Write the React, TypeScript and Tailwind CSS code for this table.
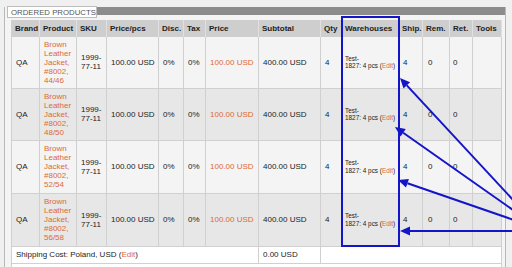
const sizes = ["44/46", "48/50", "52/54", "56/58"];

const cols = [28, 37, 30, 52, 25, 22, 53, 62, 21, 57, 24, 27, 23, 29];
const heads = ["Brand", "Product", "SKU", "Price/pcs", "Disc.", "Tax", "Price", "Subtotal", "Qty", "Warehouses", "Ship.", "Rem.", "Ret.", "Tools"];

// arrows drawn from a point off the right edge toward the warehouses column
const origin = { x: 540, y: 229 };
const tips = [
  { x: 400, y: 78 },
  { x: 395, y: 127 },
  { x: 398, y: 180 },
  { x: 400, y: 231, flat: true },
];

function Arrow({ tx, ty, ox, oy }: { tx: number; ty: number; ox: number; oy: number }) {
  const dx = tx - ox;
  const dy = ty - oy;
  const len = Math.hypot(dx, dy);
  const ux = dx / len;
  const uy = dy / len;
  const bx = tx - ux * 10;
  const by = ty - uy * 10;
  const px = -uy * 4.5;
  const py = ux * 4.5;
  return (
    <g>
      <line x1={ox} y1={oy} x2={bx} y2={by} stroke="#1414c8" strokeWidth={2} />
      <polygon points={`${tx},${ty} ${bx + px},${by + py} ${bx - px},${by - py}`} fill="#1414c8" />
    </g>
  );
}

function Edit() {
  return (
    <>
      (<span className="text-[#dc6a35]">Edit</span>)
    </>
  );
}

const td = "border-r border-b border-[#d0d0d0] px-[4px] whitespace-nowrap";

export default function App() {
  return (
    <div className="relative w-[512px] h-[267px] overflow-hidden bg-[#f0f0f0] font-['Liberation_Sans',Arial,sans-serif] text-[8px] leading-[9px] text-[#222]">
      <div className="ml-[4px] mt-[7px] w-[502px] h-[270px] border-x border-[#b8b8b8] bg-[#f4f4f4]">
        {/* section title tab + bar */}
        <div className="flex h-[11px] items-start">
          <div className="relative z-[1] ml-[2px] -mt-[1px] h-[12px] w-[90px] shrink-0 border border-[#bdbdbd] bg-white pl-[3px] text-[7.8px] leading-[12px] text-[#555] uppercase whitespace-nowrap">
            Ordered Products
          </div>
          <div className="h-[8px] flex-1 bg-[#8c8c8c]" />
        </div>

        <table className="ml-[6px] mt-[2px] w-[490px] table-fixed border-collapse border-l border-[#d0d0d0]">
          <colgroup>
            {cols.map((w, i) => (
              <col key={i} style={{ width: w }} />
            ))}
          </colgroup>
          <thead>
            <tr className="h-[17px] bg-[#cecece]">
              {heads.map((h) => (
                <th key={h} className="border-r border-[#e0e0e0] px-[3px] text-left font-bold whitespace-nowrap">
                  {h}
                </th>
              ))}
            </tr>
          </thead>
          <tbody>
            {sizes.map((s, i) => (
              <tr key={s} className={`${i === 0 ? "h-[51px]" : i === 1 ? "h-[52px]" : "h-[53px]"} ${i % 2 === 0 ? "bg-[#f4f4f4]" : "bg-[#e7e7e7]"}`}>
                <td className={td}>QA</td>
                <td className={`${td} text-[#dc6a35]`}>
                  Brown
                  <br />
                  Leather
                  <br />
                  Jacket,
                  <br />
                  #8002,
                  <br />
                  {s}
                </td>
                <td className={td}>
                  1999-
                  <br />
                  77-11
                </td>
                <td className={td}>100.00 USD</td>
                <td className={td}>0%</td>
                <td className={td}>0%</td>
                <td className={`${td} text-[#dc6a35]`}>100.00 USD</td>
                <td className={td}>400.00 USD</td>
                <td className={td}>4</td>
                <td className="border-r border-b border-[#d0d0d0] pl-[3px] pr-0 text-[6.4px] leading-[7.5px] whitespace-nowrap">
                  Test-
                  <br />
                  1827: 4 pcs <Edit />
                </td>
                <td className={td}>4</td>
                <td className="border-r border-b border-[#d0d0d0] px-[5px]">0</td>
                <td className="border-r border-b border-[#d0d0d0] px-[3px]">0</td>
                <td className={td} />
              </tr>
            ))}
            <tr className="h-[17px] bg-white">
              <td colSpan={7} className={td}>
                Shipping Cost: Poland, USD <Edit />
              </td>
              <td className={td}>0.00 USD</td>
              <td colSpan={6} className="border-r border-b border-[#d0d0d0]" />
            </tr>
            <tr className="h-[17px] bg-white">
              <td colSpan={14} className="border-r border-[#d0d0d0]" />
            </tr>
          </tbody>
        </table>
      </div>

      {/* annotation overlay */}
      <svg className="pointer-events-none absolute inset-0" width={512} height={267} viewBox="0 0 512 267">
        <rect x={342} y={17} width={57} height={229} fill="none" stroke="#1414c8" strokeWidth={2} />
        {tips.map((t, i) => (
          <Arrow key={i} tx={t.x} ty={t.y} ox={origin.x} oy={t.flat ? t.y : origin.y} />
        ))}
      </svg>
    </div>
  );
}
